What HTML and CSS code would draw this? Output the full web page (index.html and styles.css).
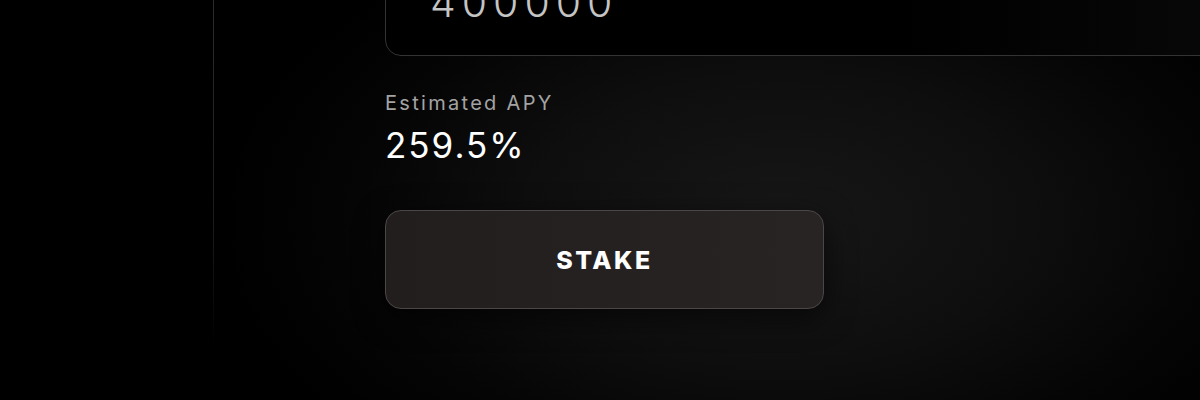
FILE: index.html
```html
<!DOCTYPE html>
<html lang="en">
<head>
<meta charset="utf-8">
<title>Stake</title>
<link rel="stylesheet" href="styles.css">
</head>
<body>
<div class="layout">
  <aside class="sidebar"></aside>
  <main class="main">
    <div class="amount-field">
      <span class="amount-value">400000</span>
    </div>
    <div class="apy">
      <div class="apy-label">Estimated APY</div>
      <div class="apy-value">259.5%</div>
    </div>
    <button class="stake-btn" type="button">STAKE</button>
  </main>
</div>
</body>
</html>
```
FILE: styles.css
```css
* { box-sizing: border-box; }

html, body {
  margin: 0;
  height: 400px;
  overflow: hidden;
  background: #000;
  font-family: Inter, "Noto Sans", sans-serif;
  color: #fff;
}

.layout {
  display: flex;
  height: 400px;
  background: radial-gradient(ellipse 560px 320px at 780px 220px, #171717 0%, #0e0e0e 45%, #050505 75%, #000 100%);
}

.sidebar {
  width: 214px;
  flex: 0 0 214px;
  border-right: 1px solid transparent;
  border-image: linear-gradient(to bottom, #2c2c2c 0%, #1c1c1c 55%, rgba(20,20,20,0) 86%) 1;
  background: #000;
}

.main {
  flex: 1;
  min-width: 0;
  padding-left: 171px;
  display: flex;
  flex-direction: column;
  align-items: flex-start;
}

.amount-field {
  width: calc(100% + 40px);
  margin-top: -50px;
  padding: 27px 44px 29px;
  border: 1px solid #333;
  border-radius: 16px;
  background: linear-gradient(to right, #000 0%, #000 60%, #080808 100%);
}

.amount-value {
  display: block;
  font-size: 41px;
  line-height: 48px;
  font-weight: 300;
  letter-spacing: 6px;
  color: #c4c4c4;
}

.apy {
  margin-top: 35px;
  display: flex;
  flex-direction: column;
  gap: 10px;
}

.apy-label {
  font-size: 20px;
  line-height: 24px;
  color: #a3a3a3;
  letter-spacing: 2.3px;
}

.apy-value {
  font-size: 35px;
  line-height: 40px;
  color: #fff;
  font-weight: 400;
  letter-spacing: 2px;
}

.stake-btn {
  margin-top: 45px;
  width: 439px;
  height: 99px;
  border: 1.5px solid #4d4646;
  border-radius: 16px;
  background: linear-gradient(to right, #221e1e, #282424);
  box-shadow: 0 8px 30px rgba(0,0,0,0.6);
  color: #fff;
  font-family: inherit;
  font-size: 25px;
  font-weight: 800;
  letter-spacing: 2.5px;
  cursor: pointer;
}
```
